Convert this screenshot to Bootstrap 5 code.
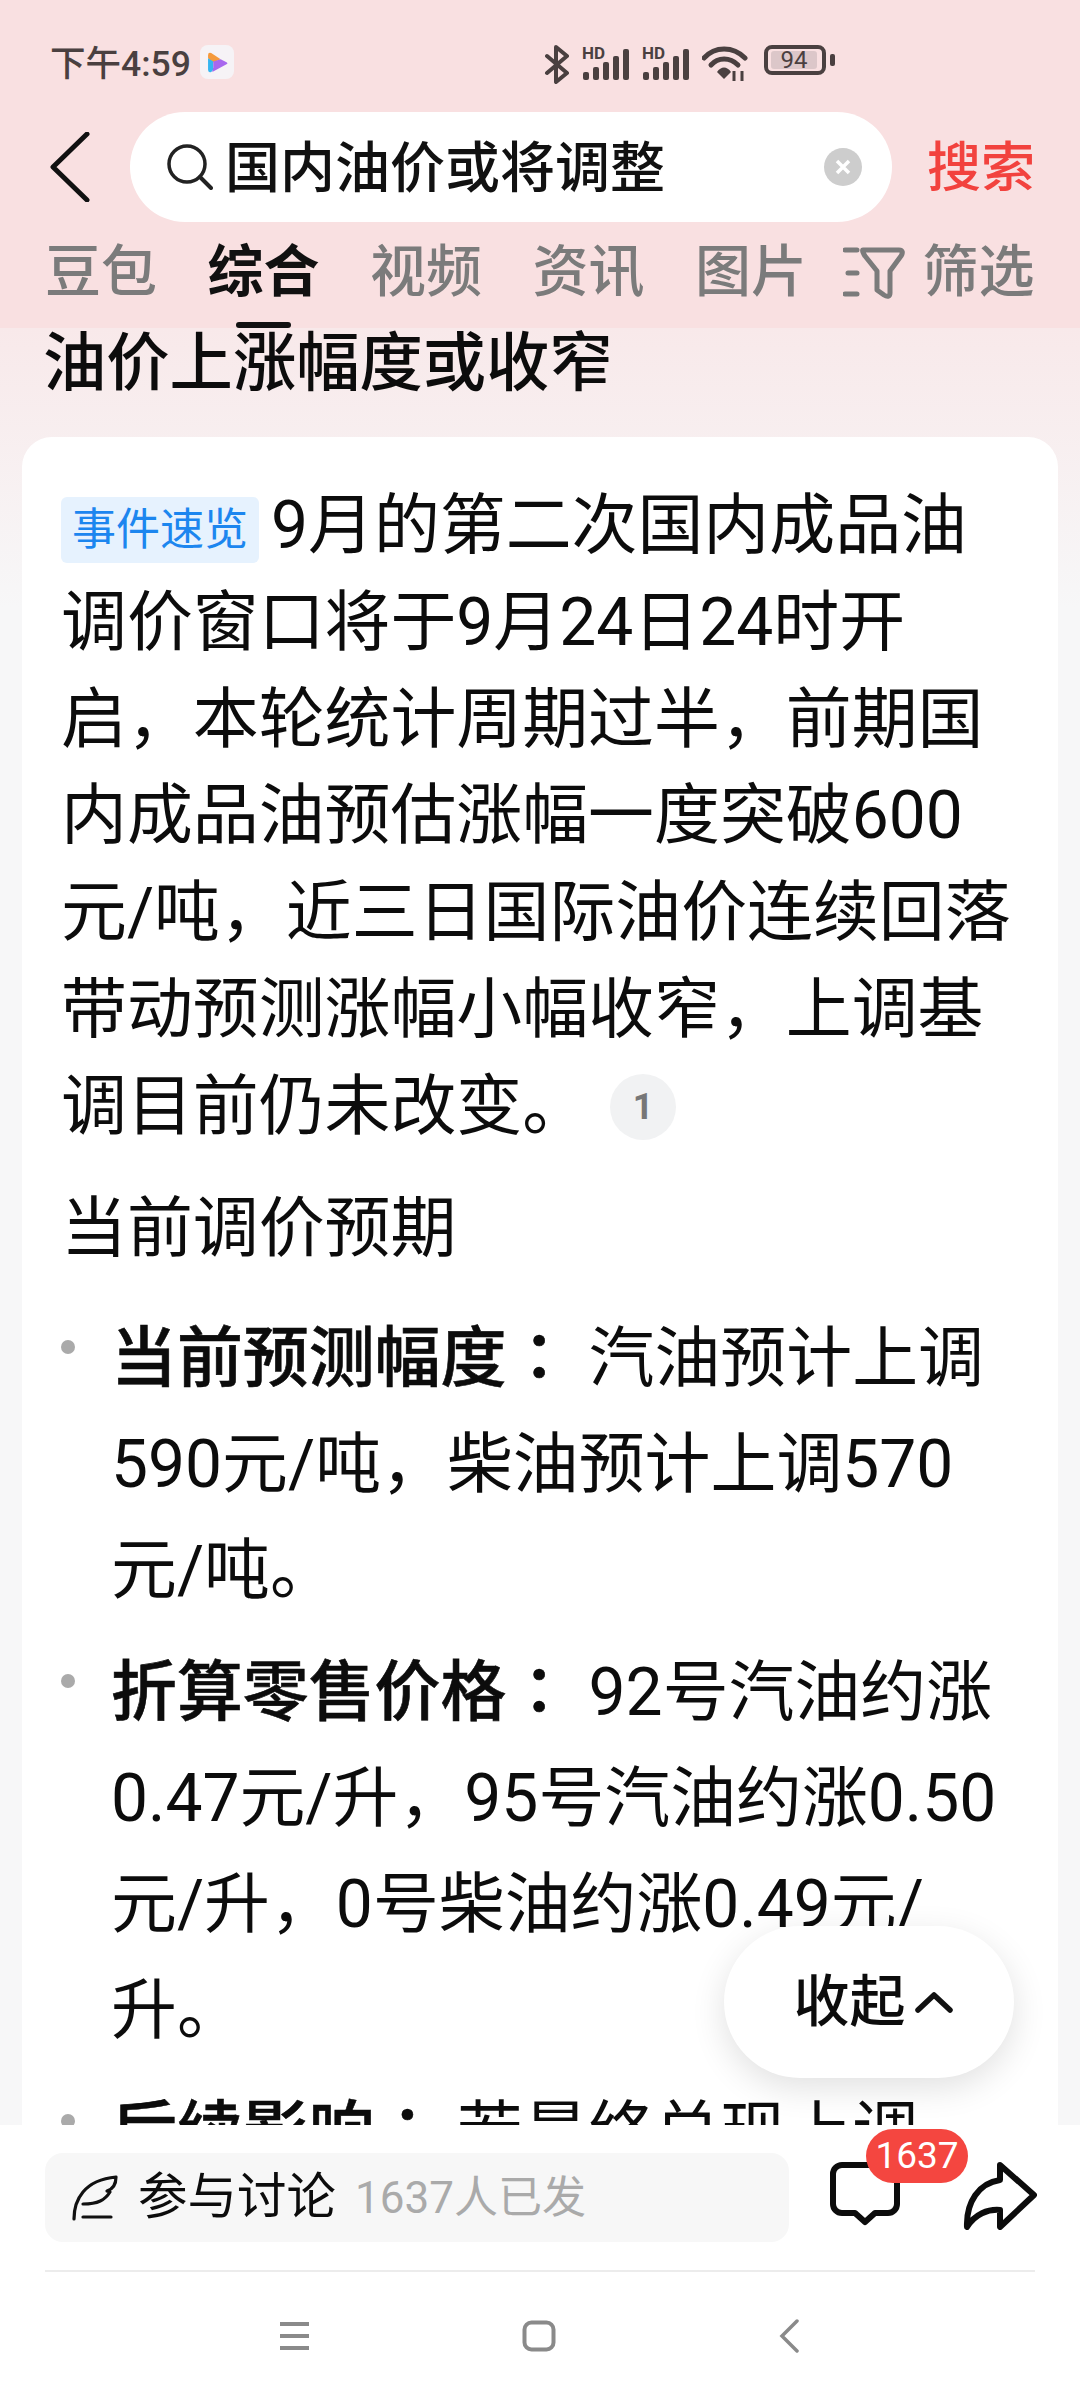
<!DOCTYPE html>
<html lang="zh"><head><meta charset="utf-8"><title>国内油价或将调整</title>
<link href="https://cdn.jsdelivr.net/npm/bootstrap@5.3.0/dist/css/bootstrap.min.css" rel="stylesheet">
<style>
html,body{margin:0;background:#fff}
.phone{width:1080px;height:2400px;overflow:hidden;font-family:Roboto,"Noto Sans CJK SC",sans-serif;color:#0c0c0c}
.topbar{height:328px;background:#f9e0e1;flex:none}
.status{height:112px;padding:45px 0 0 50px;color:#4a4040}
.clock{font-size:35.5px;font-weight:500;line-height:38px;width:150px;white-space:nowrap}
.playbox{width:34px;height:34px;background:#f6f3f6;border-radius:8px}
.st-gap1{margin-left:310px}
.st-g{margin-left:12px}
.batt{width:62px;height:30px;border:4.5px solid #4a4040;border-radius:8px;margin-left:16px;padding:1.5px 3px;flex:none}
.batt-in{background:#dcc7c9;border-radius:3px;font-size:24px;line-height:18px;height:18px;width:46px;text-align:center}
.searchrow{height:110px;padding-left:50px}
.sbox{width:762px;height:110px;background:#fff;border-radius:55px;margin-left:40px;padding-left:37px;font-size:55px;font-weight:500;color:#111}
.sbox span{margin-left:12px;line-height:1;padding-top:2px}
.clearx{margin-left:159px}
.gobtn{color:#f2423e;font-size:54px;font-weight:500;margin-left:35px;line-height:1;padding-top:3px}
.tabs{padding:25px 0 0 45px;font-size:56px;line-height:51px;color:#7b7b7b;font-weight:500;height:96px}
.tabi{width:162.5px;flex:none}
.tabon{color:#111;font-weight:700;position:relative}
.tabon::after{content:"";position:absolute;left:28px;top:75px;width:55px;height:6px;background:#111;border-radius:3px}
.filt{margin-left:-15px;margin-right:18px}
.mainpane{height:1797px;flex:none;background:linear-gradient(#f8e9ea,#f7f7f8 280px);overflow:hidden}
.ttl{font-size:63.3px;line-height:66px;font-weight:500;margin:0 0 41px;padding:2px 0 0 43px}
.sheet{margin:0 22px;background:#fff;border-radius:30px 30px 0 0;padding:41px 36px 0 39px;font-size:65.9px;line-height:96.8px}
.sheet p{margin:0}
.tagx{display:inline-block;background:#e6f2fe;color:#1c86ef;font-size:44px;line-height:66px;height:66px;width:198px;text-align:center;border-radius:6px;margin-right:12px;vertical-align:3px}
.refx{display:inline-flex;align-items:center;justify-content:center;width:66px;height:66px;border-radius:50%;background:#f1f2f3;color:#777;font-size:36px;font-weight:700;margin-left:22px;vertical-align:10px;margin-bottom:-12px}
.blist{list-style:none;margin:0;padding:23px 0 0 0;line-height:106px}
.blist li{padding-left:50px;position:relative;margin-bottom:10px}
.blist li::before{content:"";position:absolute;left:0;top:40px;width:14px;height:14px;border-radius:50%;background:#aaa}
.blist b{font-weight:500;-webkit-text-stroke:.6px currentColor}
.colonx{font-family:"Noto Sans CJK TC",sans-serif}
.sub{margin-top:25px!important}
.fold{position:absolute;left:724px;top:1926px;width:290px;height:152px;border-radius:76px;background:#fff;box-shadow:0 10px 34px rgba(0,0,0,.12);font-size:56px;font-weight:500;padding-left:8px}
.fold svg{margin-left:9px}
.foot{height:275px;background:#fff;flex:none;position:relative}
.fieldx{position:absolute;left:45px;top:28px;width:744px;height:89px;background:#f7f7f7;border-radius:18px;padding-left:27px}
.fieldx b{font-weight:400;font-size:49.5px;margin-left:20px;line-height:1}
.fieldx i{font-style:normal;font-size:44px;color:#aaa;margin-left:19px;line-height:1}
.cmt{position:absolute;left:830px;top:37px}
.shr{position:absolute;left:963px;top:37px}
.numx{position:absolute;left:866px;top:4px;width:102px;height:54px;border-radius:27px;background:#f44640;color:#fff;font-size:37px;line-height:54px;text-align:center}
.rule{position:absolute;left:45px;right:45px;top:145px;border-top:2px solid #ececec}
.sysnav{position:absolute;left:279px;top:194px;width:520px}
.homex{margin-right:12px}
</style></head><body>
<div class="phone d-flex flex-column position-relative">
<header class="topbar">
  <div class="status d-flex align-items-start">
    <div class="clock">下午4:59</div>
    <div class="playbox d-flex align-items-center justify-content-center"><svg width="21" height="21" viewBox="0 0 20 20"><path d="M1 3 Q1 0 4 1 L13 7 L6 10 L1 6Z" fill="#f59a3c"/><path d="M1 6 L6 9 V15 L7 16 L4 19 Q1 20 1 17Z" fill="#35b5f0"/><path d="M6 9 L13 7 L19 10 Q20 11 19 11.5 L5 19 L6 15Z" fill="#a867ee"/></svg></div>
    <svg class="st-gap1 flex-none" width="26" height="39" viewBox="0 0 26 39"><path d="M3 11 L23 28 L12 37 V2 L23 11 L3 28" fill="none" stroke="#4a4040" stroke-width="4" stroke-linejoin="round" stroke-linecap="round"/></svg>
    <svg class="st-g" width="48" height="36" viewBox="0 0 48 36"><text x="0" y="14" font-family="Roboto" font-weight="700" font-size="17" fill="#4a4040">HD</text><g fill="#4a4040"><rect x="1" y="27" width="6" height="8" rx="2"/><rect x="11" y="22" width="6" height="13" rx="2"/><rect x="21" y="17" width="6" height="18" rx="2"/><rect x="31" y="11" width="6" height="24" rx="2"/><rect x="41" y="4" width="6" height="31" rx="2"/></g></svg>
    <svg class="st-g" width="48" height="36" viewBox="0 0 48 36"><text x="0" y="14" font-family="Roboto" font-weight="700" font-size="17" fill="#4a4040">HD</text><g fill="#4a4040"><rect x="1" y="27" width="6" height="8" rx="2"/><rect x="11" y="22" width="6" height="13" rx="2"/><rect x="21" y="17" width="6" height="18" rx="2"/><rect x="31" y="11" width="6" height="24" rx="2"/><rect x="41" y="4" width="6" height="31" rx="2"/></g></svg>
    <svg class="st-g" width="46" height="36" viewBox="0 0 46 36"><g fill="none" stroke="#4a4040" stroke-width="5" stroke-linecap="round"><path d="M2 13 C13 1 31 1 43 13"/><path d="M9 20 C16 12 28 12 36 20"/></g><path d="M15 27 C19 21 25 21 29 27 L22 34Z" fill="#4a4040"/><path d="M32 26 V36 M40 26 V36" stroke="#4a4040" stroke-width="3"/></svg>
    <div class="d-flex align-items-center"><div class="batt"><div class="batt-in">94</div></div><svg class="ms-1" width="5" height="12" viewBox="0 0 5 12"><rect width="5" height="12" rx="2" fill="#4a4040"/></svg></div>
  </div>
  <div class="searchrow d-flex align-items-center">
    <svg class="flex-none" width="40" height="70" viewBox="0 0 40 70"><path d="M37 2 L3 35 L37 68" fill="none" stroke="#111" stroke-width="5" stroke-linecap="round" stroke-linejoin="round"/></svg>
    <div class="sbox d-flex align-items-center">
      <svg class="flex-none" width="46" height="46" viewBox="0 0 46 46"><circle cx="20" cy="20" r="18" fill="none" stroke="#222" stroke-width="3.5"/><path d="M33 33 L44 44" stroke="#222" stroke-width="4" stroke-linecap="round"/></svg>
      <span>国内油价或将调整</span>
      <svg class="clearx flex-none" width="38" height="38" viewBox="0 0 38 38"><circle cx="19" cy="19" r="19" fill="#cdcdcd"/><path d="M13 13 L25 25 M25 13 L13 25" stroke="#fff" stroke-width="3.5"/></svg>
    </div>
    <div class="gobtn">搜索</div>
  </div>
  <div class="tabs d-flex">
    <div class="tabi">豆包</div><div class="tabon tabi">综合</div><div class="tabi">视频</div><div class="tabi">资讯</div><div class="tabi">图片</div>
    <svg class="filt flex-none" width="62" height="52" viewBox="0 0 62 52"><g fill="none" stroke="#7b7b7b" stroke-width="5" stroke-linecap="round" stroke-linejoin="round"><path d="M2 3 H14 M5 26 H14 M2 47 H14"/><path d="M20 3 H56 C60 3 60 6 58 9 L47 24 V46 C47 50 44 50 41 48 L34 43 V24 L22 9 C20 6 19 3 20 3Z"/></g></svg>
    <div>筛选</div>
  </div>
</header>
<main class="mainpane">
  <h1 class="ttl">油价上涨幅度或收窄</h1>
  <article class="sheet">
    <p><span class="tagx">事件速览</span>9月的第二次国内成品油调价窗口将于9月24日24时开启，本轮统计周期过半，前期国内成品油预估涨幅一度突破600元/吨，近三日国际油价连续回落带动预测涨幅小幅收窄，上调基调目前仍未改变。<span class="refx">1</span></p>
    <p class="sub">当前调价预期</p>
    <ul class="blist">
      <li><b>当前预测幅度<span class="colonx" lang="zh-Hant">：</span></b> 汽油预计上调590元/吨，柴油预计上调570元/吨。</li>
      <li><b>折算零售价格<span class="colonx" lang="zh-Hant">：</span></b> 92号汽油约涨0.47元/升，95号汽油约涨0.50元/升，0号柴油约涨0.49元/升。</li>
      <li><b>后续影响<span class="colonx" lang="zh-Hant">：</span></b> 若最终兑现上调，车主加满一箱油将多花费用。</li>
    </ul>
  </article>
</main>
<footer class="foot">
  <div class="fieldx d-flex align-items-center">
    <svg class="flex-none" width="46" height="46" viewBox="0 0 46 46"><g fill="none" stroke="#111" stroke-width="3.2" stroke-linecap="round" stroke-linejoin="round"><path d="M2 44 C2 25 12 5 44 2 C44 9 41 14 35 16 L38 17 C33 25 26 29 11 29"/><path d="M11 42 H39"/></g></svg>
    <b>参与讨论</b><i>1637人已发</i>
  </div>
  <svg class="cmt" width="70" height="64" viewBox="0 0 70 64"><path d="M12 3 H58 a9 9 0 0 1 9 9 V42 a9 9 0 0 1 -9 9 H45 L35 60 L25 51 H12 a9 9 0 0 1 -9 -9 V12 a9 9 0 0 1 9 -9z" fill="none" stroke="#0c0c0c" stroke-width="6" stroke-linejoin="round"/></svg>
  <div class="numx">1637</div>
  <svg class="shr" width="74" height="68" viewBox="0 0 74 68"><path d="M37 3 L71 33 L37 65 V48 C25 47 12 52 4 65 C3 40 16 21 37 18 Z" fill="none" stroke="#0c0c0c" stroke-width="6" stroke-linejoin="round"/></svg>
  <div class="rule"></div>
  <div class="sysnav d-flex justify-content-between align-items-center">
    <svg width="31" height="30" viewBox="0 0 31 30"><path d="M1 3 H30 M1 15 H30 M1 27 H30" stroke="#8a8a8a" stroke-width="4"/></svg>
    <svg class="homex" width="34" height="32" viewBox="0 0 34 32"><rect x="2.5" y="2.5" width="29" height="27" rx="7" fill="none" stroke="#8a8a8a" stroke-width="4"/></svg>
    <svg width="20" height="34" viewBox="0 0 20 34"><path d="M18 2 L3 17 L18 32" fill="none" stroke="#8a8a8a" stroke-width="3.5" stroke-linecap="round"/></svg>
  </div>
</footer>
<div class="fold d-flex align-items-center justify-content-center">收起<svg width="38" height="22" viewBox="0 0 38 22"><path d="M3 19 L19 4 L35 19" fill="none" stroke="#111" stroke-width="5.5" stroke-linecap="round" stroke-linejoin="round"/></svg></div>
</div>
<script src="https://cdn.jsdelivr.net/npm/bootstrap@5.3.0/dist/js/bootstrap.bundle.min.js"></script>
</body></html>
